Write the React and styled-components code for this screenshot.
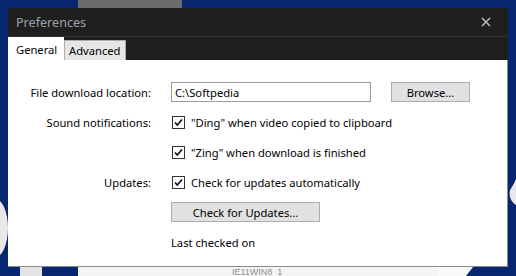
import styled, { createGlobalStyle } from 'styled-components'

const GlobalStyle = createGlobalStyle`
  html, body {
    margin: 0;
    padding: 0;
  }
  body {
    width: 516px;
    height: 276px;
    overflow: hidden;
    background: #06266f;
    font-family: 'Segoe UI', 'Noto Sans', 'Open Sans', sans-serif;
    position: relative;
  }
`

const Desktop = styled.svg`
  position: absolute;
  left: 0;
  top: 0;
  width: 516px;
  height: 276px;
`

const Window = styled.div`
  position: absolute;
  left: 8px;
  top: 8px;
  width: 500px;
  height: 259px;
  display: flex;
  flex-direction: column;
  background: #1f1f1f;
`

const TitleBar = styled.div`
  height: 29px;
  display: flex;
  align-items: center;
  justify-content: space-between;
  padding: 0 17px 0 8px;
  border-bottom: 1px solid #333;
  box-sizing: border-box;
  color: #9aa3ad;
  font-size: 12.6px;
`

const CloseButton = styled.svg`
  width: 10px;
  height: 10px;
`

const TabStrip = styled.div`
  height: 23px;
  display: flex;
  align-items: flex-end;
`

const Tab = styled.div`
  box-sizing: border-box;
  font-size: 11.2px;
  color: #000;
  height: ${(p) => (p.active ? '23px' : '20px')};
  width: ${(p) => p.width}px;
  background: ${(p) => (p.active ? '#fff' : '#e6e6e6')};
  border: 1px solid ${(p) => (p.active ? '#fff' : '#acacac')};
  border-bottom: none;
  padding-left: ${(p) => (p.active ? 7 : 4)}px;
  display: flex;
  align-items: center;
  white-space: nowrap;
`

const Panel = styled.div`
  flex: 1;
  background: #fff;
  border-right: 1px solid #8a8a8a;
  border-bottom: 1px solid #8a8a8a;
  display: grid;
  grid-template-columns: 143px 1fr;
  grid-auto-rows: 20px;
  column-gap: 20px;
  row-gap: 10px;
  align-content: start;
  padding-top: 22px;
  font-size: 11.2px;
  color: #000;
`

const Label = styled.div`
  text-align: right;
  display: flex;
  align-items: center;
  justify-content: flex-end;
  white-space: nowrap;
`

const Cell = styled.div`
  display: flex;
  align-items: center;
  gap: ${(p) => p.gap || 0}px;
  white-space: nowrap;
`

const PathInput = styled.div`
  box-sizing: border-box;
  width: 200px;
  height: 20px;
  border: 1px solid #9c9c9c;
  padding-left: 3px;
  display: flex;
  align-items: center;
`

const Button = styled.div`
  box-sizing: border-box;
  width: ${(p) => p.width}px;
  height: 20px;
  background: #e1e1e1;
  border: 1px solid #adadad;
  display: flex;
  align-items: center;
  justify-content: center;
`

const Check = styled.label`
  display: flex;
  align-items: center;
  gap: 6px;
  padding-left: 1px;
`

const Box = styled.span`
  box-sizing: border-box;
  width: 13px;
  height: 13px;
  border: 1px solid #333;
  display: flex;
  align-items: center;
  justify-content: center;
`

const CheckBox = ({ children }) => (
  <Check>
    <Box>
      <svg width="11" height="11" viewBox="0 0 11 11">
        <path d="M2 5.5 L4.3 8 L9 2.5" fill="none" stroke="#111" strokeWidth="1.7" />
      </svg>
    </Box>
    {children}
  </Check>
)

const Empty = styled.div``

const App = () => {
  return (
    <>
      <GlobalStyle />
      <Desktop viewBox="0 0 516 276">
        <rect x="78" y="0" width="104" height="10" fill="#6b6b6b" />
        <ellipse cx="-6" cy="228" rx="14" ry="30" fill="#e8e8ea" />
        <rect x="20" y="266" width="22" height="10" fill="#e4e4e4" />
        <rect x="78" y="266" width="360" height="10" fill="#f4f4f4" />
        <rect x="438" y="266" width="78" height="10" fill="#fafafa" />
        <path d="M466 276 L480 258 L516 258 L516 276 Z" fill="#06266f" />
        <path d="M510 190 Q520 175 516 170 L516 205 Q508 200 510 190 Z" fill="#e8e8ea" />
        <text x="232" y="275" fontSize="9" fill="#8a8f99" fontFamily="Liberation Sans, sans-serif">
          IE11WIN8_1
        </text>
      </Desktop>
      <Window>
        <TitleBar>
          <span>Preferences</span>
          <CloseButton viewBox="0 0 10 10">
            <path d="M1 1 L9 9 M9 1 L1 9" stroke="#c4c4c4" strokeWidth="1.4" />
          </CloseButton>
        </TitleBar>
        <TabStrip>
          <Tab active width={56}>General</Tab>
          <Tab width={62}>Advanced</Tab>
        </TabStrip>
        <Panel>
          <Label>File download location:</Label>
          <Cell gap={20}>
            <PathInput>C:\Softpedia</PathInput>
            <Button width={79}>Browse...</Button>
          </Cell>
          <Label>Sound notifications:</Label>
          <Cell>
            <CheckBox>"Ding" when video copied to clipboard</CheckBox>
          </Cell>
          <Empty />
          <Cell>
            <CheckBox>"Zing" when download is finished</CheckBox>
          </Cell>
          <Label>Updates:</Label>
          <Cell>
            <CheckBox>Check for updates automatically</CheckBox>
          </Cell>
          <Empty />
          <Cell>
            <Button width={149}>Check for Updates...</Button>
          </Cell>
          <Empty />
          <Cell>Last checked on</Cell>
        </Panel>
      </Window>
    </>
  )
}

export default App
